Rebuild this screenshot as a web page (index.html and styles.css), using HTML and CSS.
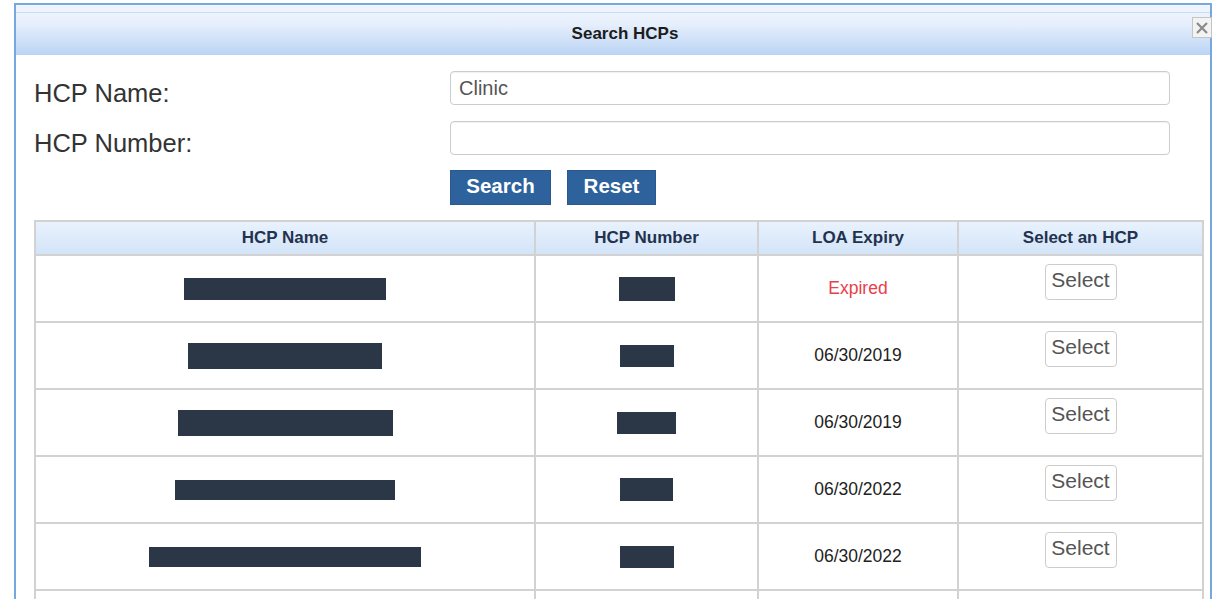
FILE: index.html
```html
<!DOCTYPE html>
<html lang="en">
<head>
<meta charset="utf-8">
<title>Search HCPs</title>
<link rel="stylesheet" href="styles.css">
</head>
<body>
<div class="dialog">
  <div class="dialog-title">
    <span class="title-text">Search HCPs</span>
    <span class="close-btn" aria-label="Close">
      <svg width="16" height="16" viewBox="0 0 16 16"><path d="M3 3 L13 13 M13 3 L3 13" stroke="#8a8a8a" stroke-width="2.2" fill="none"/></svg>
    </span>
  </div>
  <div class="dialog-body">
    <div class="form-row">
      <label class="form-label">HCP Name:</label>
      <input class="form-input" type="text" value="Clinic">
    </div>
    <div class="form-row">
      <label class="form-label">HCP Number:</label>
      <input class="form-input" type="text" value="">
    </div>
    <div class="actions">
      <button class="btn-primary btn-search">Search</button>
      <button class="btn-primary btn-reset">Reset</button>
    </div>
    <table class="results">
      <colgroup>
        <col class="c-name"><col class="c-num"><col class="c-loa"><col class="c-sel">
      </colgroup>
      <thead>
        <tr><th>HCP Name</th><th>HCP Number</th><th>LOA Expiry</th><th>Select an HCP</th></tr>
      </thead>
      <tbody>
        <tr>
          <td><span class="redact rn1"></span></td>
          <td><span class="redact rc1"></span></td>
          <td class="expired">Expired</td>
          <td class="sel"><button class="btn-select">Select</button></td>
        </tr>
        <tr>
          <td><span class="redact rn2"></span></td>
          <td><span class="redact rc2"></span></td>
          <td class="date">06/30/2019</td>
          <td class="sel"><button class="btn-select">Select</button></td>
        </tr>
        <tr>
          <td><span class="redact rn3"></span></td>
          <td><span class="redact rc3"></span></td>
          <td class="date">06/30/2019</td>
          <td class="sel"><button class="btn-select">Select</button></td>
        </tr>
        <tr>
          <td><span class="redact rn4"></span></td>
          <td><span class="redact rc4"></span></td>
          <td class="date">06/30/2022</td>
          <td class="sel"><button class="btn-select">Select</button></td>
        </tr>
        <tr>
          <td><span class="redact rn5"></span></td>
          <td><span class="redact rc5"></span></td>
          <td class="date">06/30/2022</td>
          <td class="sel"><button class="btn-select">Select</button></td>
        </tr>
        <tr>
          <td><span class="redact rn1"></span></td>
          <td><span class="redact rc1"></span></td>
          <td class="date">06/30/2022</td>
          <td class="sel"><button class="btn-select">Select</button></td>
        </tr>
      </tbody>
    </table>
  </div>
</div>
</body>
</html>
```

FILE: styles.css
```css
html, body {
  margin: 0;
  padding: 0;
  background: #ffffff;
  overflow: hidden;
}

body {
  font-family: "Liberation Sans", Arial, sans-serif;
  color: #333333;
}

.dialog {
  margin: 3px 0 0 14px;
  width: 1194px;
  border: 2px solid #76a7df;
  border-bottom: none;
  background: #ffffff;
  height: 700px;
}

.dialog-title {
  position: relative;
  height: 49px;
  border-top: 1px solid #f4f8fe;
  background:
    linear-gradient(#eef4fd, #eef4fd) top / 100% 6px no-repeat,
    linear-gradient(#c9dcf5, #c9dcf5) 0 6px / 100% 1px no-repeat,
    linear-gradient(#edf3fd 7px, #e6effc 18px, #bbd4f4 49px);
  display: flex;
  align-items: center;
  justify-content: center;
}

.title-text {
  font-weight: bold;
  font-size: 17px;
  color: #1c1c1c;
  padding: 7px 0 0 24px;
}

.close-btn {
  position: absolute;
  right: -2px;
  top: 11px;
  width: 18px;
  height: 19px;
  border: 1px solid #c4c4c4;
  background: #f3f3f3;
  display: flex;
  align-items: center;
  justify-content: center;
}

.dialog-body {
  padding: 16px 8px 0 18px;
}

.form-row {
  display: flex;
  align-items: flex-start;
  height: 34px;
  margin-bottom: 16px;
}

.form-label {
  width: 416px;
  flex: none;
  font-size: 25.5px;
  line-height: 34px;
  color: #333333;
  padding-top: 5px;
}

.form-input {
  width: 720px;
  height: 34px;
  box-sizing: border-box;
  border: 1px solid #cccccc;
  border-radius: 4px;
  padding: 0 8px;
  font-family: "Liberation Sans", Arial, sans-serif;
  font-size: 20px;
  color: #555555;
  box-shadow: inset 0 1px 1px rgba(0, 0, 0, 0.06);
  margin: 0;
}

.actions {
  display: flex;
  gap: 16px;
  padding-left: 416px;
  margin-top: -1px;
  margin-bottom: 15px;
}

.btn-primary {
  height: 35px;
  background: #2e629c;
  border: 1px solid #2a5990;
  color: #ffffff;
  font-family: "Liberation Sans", Arial, sans-serif;
  font-weight: bold;
  font-size: 20.5px;
  padding: 0 0 3px 0;
  margin: 0;
}

.btn-search { width: 101px; }
.btn-reset { width: 89px; }

.results {
  width: 1168px;
  border-collapse: collapse;
  table-layout: fixed;
}

.c-name { width: 500px; }
.c-num { width: 223px; }
.c-loa { width: 200px; }
.c-sel { width: 245px; }

.results th,
.results td {
  border: 2px solid #d2d2d2;
  text-align: center;
  padding: 0;
}

.results thead tr {
  height: 34px;
}

.results th {
  font-size: 17px;
  font-weight: bold;
  color: #22324f;
  background: linear-gradient(#e9f2fd, #d3e4f8);
}

.results tbody tr {
  height: 67px;
}

.results td {
  vertical-align: middle;
  font-size: 17.5px;
  color: #222222;
}

.results td.expired {
  color: #e8404a;
}

.results td.sel {
  vertical-align: top;
  padding-top: 8px;
}

.redact {
  display: inline-block;
  vertical-align: middle;
  background: #2b3647;
  height: 22px;
}

.rn1 { width: 202px; }
.rn2 { width: 194px; height: 26px; }
.rn3 { width: 215px; height: 26px; }
.rn4 { width: 220px; height: 20px; }
.rn5 { width: 272px; height: 20px; }
.rc1 { width: 56px; height: 24px; }
.rc2 { width: 54px; }
.rc3 { width: 59px; }
.rc4 { width: 53px; height: 23px; }
.rc5 { width: 54px; }

.btn-select {
  width: 72px;
  height: 36px;
  background: #ffffff;
  border: 1px solid #cccccc;
  border-radius: 4px;
  font-family: "Liberation Sans", Arial, sans-serif;
  font-size: 21px;
  color: #555555;
  padding: 0 0 5px 0;
  margin: 0;
}
```
